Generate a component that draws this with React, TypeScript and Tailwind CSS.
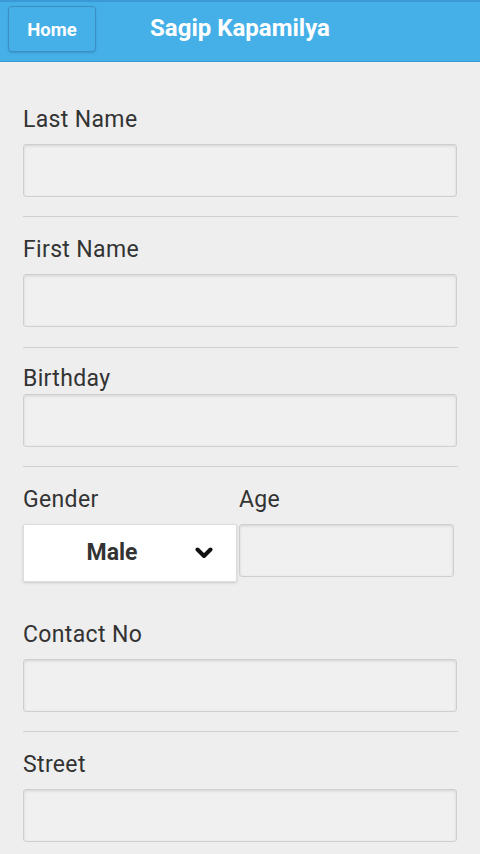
import React from "react";

const font = { fontFamily: "Roboto, 'Noto Sans', sans-serif" };

function Label({ children, className = "" }: { children: React.ReactNode; className?: string }) {
  return (
    <div className={`h-[26px] text-[23px] leading-[26px] tracking-[0.35px] text-[#333333] ${className}`}>{children}</div>
  );
}

function TextBox({ className = "" }: { className?: string }) {
  return (
    <div
      className={`h-[53px] rounded-[3px] border border-[#cfcfcf] bg-[#f0f0f0] shadow-[inset_0_1px_3px_rgba(0,0,0,0.12)] ${className}`}
    />
  );
}

function Divider({ className = "" }: { className?: string }) {
  return <div className={`h-px w-[435px] bg-[#d0d0d0] ${className}`} />;
}

export default function App() {
  return (
    <div className="min-h-[854px] w-[480px] bg-[#eeeeee] overflow-hidden" style={font}>
      {/* Header */}
      <div className="h-[62px] border-t-2 border-b border-t-[#3b9ad5] border-b-[#3a97cf] bg-[#45b0e8] flex items-center relative">
        <button className="absolute left-[8px] top-[4px] h-[46px] w-[88px] rounded-[4px] border border-[#3a8fc6] bg-[#45b0e8] pt-[3px] text-[18.5px] font-bold leading-none text-white shadow-[0_1px_2px_rgba(0,0,0,0.15)]">
          Home
        </button>
        <h1 className="w-full text-center text-[24px] font-bold text-white leading-none -mt-[7px]">Sagip Kapamilya</h1>
      </div>

      <div className="px-[23px]">
        {/* Last Name */}
        <Label className="mt-[45px]">Last Name</Label>
        <TextBox className="mt-[11px]" />
        <Divider className="mt-[19px]" />

        {/* First Name */}
        <Label className="mt-[20px]">First Name</Label>
        <TextBox className="mt-[11px]" />
        <Divider className="mt-[20px]" />

        {/* Birthday */}
        <Label className="mt-[18px]">Birthday</Label>
        <TextBox className="mt-[2px]" />
        <Divider className="mt-[19px] h-[2px]" />

        {/* Gender / Age */}
        <div className="mt-[20px] flex">
          <div className="w-[216px]">
            <Label>Gender</Label>
            <div className="mt-[11px] flex h-[58px] w-[214px] items-center rounded-[2px] border border-[#dddddd] bg-white shadow-[0_1px_3px_rgba(0,0,0,0.15)]">
              <span className="flex-1 pr-[36px] text-center text-[23px] font-bold text-[#333333]">Male</span>
              <svg className="absolute ml-[171px]" width="18" height="12" viewBox="0 0 18 12">
                <path d="M2.5 2.5 L9 9 L15.5 2.5" fill="none" stroke="#111" strokeWidth="4" strokeLinecap="round" strokeLinejoin="round" />
              </svg>
            </div>
          </div>
          <div className="w-[215px]">
            <Label>Age</Label>
            <TextBox className="mt-[11px]" />
          </div>
        </div>

        {/* Contact No */}
        <Label className="mt-[40px]">Contact No</Label>
        <TextBox className="mt-[11px]" />
        <Divider className="mt-[19px]" />

        {/* Street */}
        <Label className="mt-[20px]">Street</Label>
        <TextBox className="mt-[11px]" />
      </div>
    </div>
  );
}
